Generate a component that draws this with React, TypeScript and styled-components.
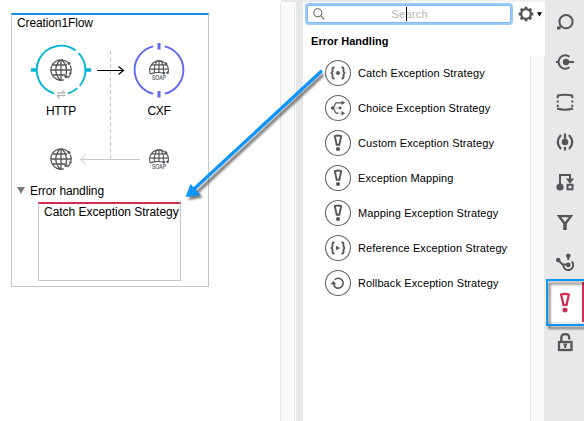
import React from "react";
import styled, { createGlobalStyle } from "styled-components";

const INK = "#55565a";
const CYAN = "#00b5d1";
const VIOLET = "#6068f2";
const RED = "#d22f50";
const BLUE = "#0d95fb";

const GlobalStyle = createGlobalStyle`
  * { box-sizing: border-box; }
  html, body { margin: 0; background: #fff; overflow: hidden; }
  body { font-family: "Liberation Sans", Arial, sans-serif; color: #000; }
  svg { display: block; overflow: visible; }
`;

const Screen = styled.div`
  position: relative;
  display: flex;
  width: 584px;
  height: 421px;
  overflow: hidden;
`;
const Canvas = styled.main`
  width: 280px;
  padding: 13px 0 0 11px;
`;
const FlowBox = styled.section`
  width: 198px;
  height: 274px;
  border: 1px solid #c6c6c6;
  border-top: 2px solid #1a8ae5;
  font-size: 12px;
`;
const FlowTitle = styled.h2`
  margin: 0;
  padding: 1px 0 0 5px;
  font-size: 12px;
  font-weight: 400;
  line-height: 14px;
  letter-spacing: -0.12px;
`;
const FlowGrid = styled.div`
  display: grid;
  grid-template-columns: 60px 38px 60px;
  grid-template-rows: 62px 19px 53px;
  margin: 10px 0 0 19px;
  justify-items: center;
`;
const Node = styled.div<{ $col: number; $row: number }>`
  grid-column: ${(p) => p.$col};
  grid-row: ${(p) => p.$row};
`;
const NodeLabel = styled.span<{ $col: number }>`
  grid-column: ${(p) => p.$col};
  grid-row: 2;
  line-height: 14px;
  padding-top: 2px;
  letter-spacing: -0.3px;
`;
const Connectors = styled.div`
  grid-column: 2;
  grid-row: 1 / 4;
`;
const SmallNode = styled(Node)`
  padding-top: 26px;
`;
const ErrorHeader = styled.div`
  display: flex;
  align-items: center;
  gap: 5px;
  height: 16px;
  padding-left: 5px;
  margin-top: 9px;
  letter-spacing: -0.1px;
`;
const StrategyBox = styled.div`
  width: 143px;
  height: 79px;
  margin: 3px 0 0 26px;
  padding: 0 0 0 5px;
  border: 1px solid #c6c6c6;
  border-top: 2px solid ${RED};
  line-height: 16px;
  letter-spacing: -0.03px;
  white-space: nowrap;
`;
const ScrollTrack = styled.div<{ $top: number }>`
  width: 15px;
  flex: none;
  margin-top: ${(p) => p.$top}px;
  background: #fafafa;
  border-left: 1px solid #e6e6e6;
  border-right: 1px solid #e9e9e9;
`;
const Work = styled.div`
  display: flex;
  width: 296px;
  background: linear-gradient(#e7e8ea, #e7e8ea) 281px 0 / 15px 2px no-repeat;
`;
const Sash = styled.div`
  width: 7px;
  background: #e7e8ea;
`;
const Palette = styled.aside`
  width: 242px;
  display: flex;
  flex-direction: column;
  padding-top: 2px;
  background:
    linear-gradient(#e7e8ea, #e7e8ea) 0 0 / 108px 2px no-repeat,
    linear-gradient(#f1f1f2, #f1f1f2) 0 0 / 100% 2px no-repeat;
`;
const SearchRow = styled.div`
  display: flex;
  align-items: center;
  height: 24px;
  margin-bottom: 2px;
  padding-left: 4px;
`;
const SearchField = styled.div`
  display: flex;
  align-items: center;
  width: 204px;
  height: 18px;
  padding: 0 82px 0 5px;
  justify-content: space-between;
  border: 1px solid #7fb9f4;
  border-radius: 2px;
  box-shadow: 0 0 0 2px #9acbfb;
  font-size: 11px;
  letter-spacing: 0.3px;
  color: #b5b5b5;
`;
const SearchText = styled.span`
  position: relative;
`;
const Caret = styled.span`
  position: absolute;
  left: 15px;
  top: -1px;
  width: 1px;
  height: 14px;
  background: #000;
`;
const Gear = styled.div`
  margin-left: 7px;
`;
const PaletteBody = styled.div`
  display: flex;
  flex: 1;
`;
const PaletteContent = styled.div`
  width: 227px;
  padding: 6px 0 0 8px;
`;
const Heading = styled.h3`
  margin: 0 0 7px;
  font-size: 11px;
  line-height: 14px;
  font-weight: 700;
  letter-spacing: 0.04px;
`;
const Item = styled.div`
  display: flex;
  align-items: center;
  gap: 6px;
  height: 35px;
  padding-left: 13px;
  font-size: 11px;
  letter-spacing: 0.11px;
  white-space: nowrap;
`;
const Rail = styled.nav`
  width: 39px;
  background: #e7e8ea;
  padding-top: 2px;
`;
const RailItem = styled.div<{ $active?: boolean }>`
  display: flex;
  align-items: center;
  height: 40px;
  padding-left: 8px;
  background: ${(p) => (p.$active ? "#fff" : "transparent")};
  border-right: ${(p) => (p.$active ? `2px solid ${RED}` : "0")};
`;
const Overlay = styled.div`
  position: absolute;
  inset: 0;
`;

const Globe = () => (
  <g fill="none" stroke={INK} strokeWidth="1.3">
    <path d="M7.2-7.2A10.2 10.2 0 1 0 3 9.8M9.2-4.5A10.2 10.2 0 0 1 9.9 2.5M9 5A10.2 10.2 0 0 1 6.5 8" />
    <path d="M0-10V10M-10 0H10M-8.5-5H6M-8.5 5H4M-1-10Q-9.5 0-1 10M1-10Q7-4 5 5" />
    <g fill={INK} stroke="none">
      <circle cx="8" cy="-6.5" r="1.5" />
      <circle cx="5" cy="6.5" r="1.6" />
      <circle cx="9.3" cy="3.5" r="1.2" />
    </g>
  </g>
);

const SoapGlobe = () => (
  <g fill="none" stroke={INK} strokeWidth="1.15">
    <path d="M-8.6 4A9.4 9.4 0 1 1 8.6 4M-8.6 4Q-6 2.8-3.8 2.6Q0 2.2 3.8 3M0-10V2.3M-4.6 2.5Q-5.5-5-1-9.8M4.5 1.5Q5.2-5 1-9.8M-8-5.2H7M-9.3-.9H9.3" />
    <g fill={INK} stroke="none">
      <circle cx="7" cy="-6" r="1.4" />
      <circle cx="4.8" cy="3" r="1.5" />
      <circle cx="8.4" cy="2.8" r="1.2" />
    </g>
    <text
      x="0"
      y="10"
      textAnchor="middle"
      fontSize="6.5"
      textLength="14"
      lengthAdjust="spacingAndGlyphs"
      fill={INK}
      stroke={INK}
      strokeWidth=".15"
    >
      SOAP
    </text>
  </g>
);

const SmallGlobe = ({ soap = false }: { soap?: boolean }) => (
  <svg width="24" height="24" viewBox="-12 -12 24 24">
    {soap ? <SoapGlobe /> : <Globe />}
  </svg>
);

const HttpNode = () => (
  <svg width="62" height="60" viewBox="-31 -30 62 60">
    <path
      d="M-7 23.4A24.4 24.4 0 1 1 14.7-19.5M17.6-16.9A24.4 24.4 0 0 1 18.8 15.6M16.3 18.1A24.4 24.4 0 0 1 7 23.4"
      fill="none"
      stroke={CYAN}
      strokeWidth="1.9"
    />
    <path d="M-30-1.8h6v3.6h-6zM24-1.8h6v3.6h-6z" fill={CYAN} />
    <path d="M-4 23H4L1 20.3M4 25.7H-4L-1 28.4" fill="none" stroke="#999" strokeWidth="1" />
    <Globe />
  </svg>
);

const CxfNode = () => (
  <svg width="60" height="60" viewBox="-30 -30 60 60">
    <path
      d="M-5.8-23.7A24.4 24.4 0 0 0-5.8 23.7M5.8-23.7A24.4 24.4 0 0 1 5.8 23.7"
      fill="none"
      stroke={VIOLET}
      strokeWidth="1.9"
    />
    <path d="M-1.5-27h3v6.5h-3zM-1.5 21h3v6.5h-3z" fill={VIOLET} />
    <SoapGlobe />
  </svg>
);

const ConnectorLines = () => (
  <svg width="60" height="120" viewBox="0 0 60 120">
    <path d="M30.5 11V119" stroke="#c4c4c4" strokeDasharray="4 2.5" />
    <path d="M17 30.5H43M38.5 26.5L43.5 30.5L38.5 34.5" stroke="#000" strokeWidth="1.2" fill="none" />
    <path d="M60 119.5H1M5.5 115L0.5 119.5L5.5 124" stroke="#c8c8c8" fill="none" />
  </svg>
);

const Bang = () => (
  <>
    <path d="M-3.2-6.9Q0-8.1 3.2-6.9L1.3 1.8H-1.3Z" fill="none" stroke="currentColor" strokeWidth="1.9" />
    <circle cy="6" r="2.1" fill="currentColor" />
  </>
);

type Kind = "catch" | "choice" | "bang" | "reference" | "rollback";

const Braces = () => (
  <path
    d="M-3.5-5.5H-4.5Q-5.5-5.5-5.5-4.3V-1.5L-6.5 0L-5.5 1.5V4.3Q-5.5 5.5-4.5 5.5H-3.5M3.5-5.5H4.5Q5.5-5.5 5.5-4.3V-1.5L6.5 0L5.5 1.5V4.3Q5.5 5.5 4.5 5.5H3.5"
    fill="none"
    stroke={INK}
    strokeWidth="1.8"
  />
);

const glyphs: Record<Kind, React.ReactNode> = {
  catch: (
    <>
      <Braces />
      <path d="M-4 0H4" stroke="#ccc" />
      <circle r="1.9" fill={INK} />
    </>
  ),
  choice: (
    <>
      <path d="M-3 0H4M-2 5.2H3" stroke="#ccc" strokeWidth="1.5" />
      <path d="M-5 0L-2-5.2H4M-5 0L-2 5.2H0" fill="none" stroke={INK} strokeWidth="1.3" />
      <path d="M3.5-7.6L7.1-5.2L3.5-2.9ZM3.5 2.9L7.1 5.2L3.5 7.6Z" fill={INK} />
      <circle cx="-5.3" r="1.8" fill={INK} />
      <circle cx="2" r="1.4" fill={INK} />
    </>
  ),
  bang: <Bang />,
  reference: (
    <>
      <Braces />
      <path d="M-2-2.3L2.2 0L-2 2.3Z" fill={INK} />
    </>
  ),
  rollback: (
    <>
      <path d="M-4.5 1.5A4.9 4.9 0 1 0-3.2-3.3" fill="none" stroke={INK} strokeWidth="1.6" />
      <path d="M-7.4 1.5L-4.6-2.2L-1.6 1.5Z" fill={INK} />
    </>
  ),
};

const items: { label: string; kind: Kind }[] = [
  { label: "Catch Exception Strategy", kind: "catch" },
  { label: "Choice Exception Strategy", kind: "choice" },
  { label: "Custom Exception Strategy", kind: "bang" },
  { label: "Exception Mapping", kind: "bang" },
  { label: "Mapping Exception Strategy", kind: "bang" },
  { label: "Reference Exception Strategy", kind: "reference" },
  { label: "Rollback Exception Strategy", kind: "rollback" },
];

const StrategyIcon = ({ kind }: { kind: Kind }) => (
  <svg width="28" height="28" viewBox="-14 -14 28 28" color={INK}>
    <circle r="12.5" fill="#fff" stroke="#666" strokeWidth="1.1" />
    {glyphs[kind]}
  </svg>
);

const railGlyphs: React.ReactNode[] = [
  <>
    <circle cx="1" cy="-.3" r="6.6" />
    <path d="M-3.8 4L-6.8 6.5M-7 4.5V6.6H-4.5" strokeWidth="1.8" />
  </>,
  <>
    <path d="M4.5-5.2A6.7 6.7 0 1 0 4.5 5.2M-9 0H-5.5M0 0H9" />
    <circle cx="1" r="3.2" fill={INK} stroke="none" />
  </>,
  <>
    <path d="M-8-6.2Q0-8.5 8-6.2M-8 6.5Q0 8.8 8 6.5" />
    <path d="M-7.3-6V7M7.3-6V7" strokeDasharray="2.2 2.2" />
  </>,
  <>
    <path d="M-4-7Q-10.5 0-4 7M4-7Q10.5 0 4 7M0-8.5V0M0 5V8.5" strokeWidth="2.2" />
    <circle r="3.3" fill={INK} stroke="none" />
  </>,
  <>
    <path d="M-5 3V-7H5V-2" />
    <path d="M1-3.5H9L5 2Z" fill={INK} stroke="none" />
    <circle cx="-5" cy="5" r="3.6" fill={INK} stroke="none" />
    <rect x="2.5" y="2.8" width="5" height="4.5" />
  </>,
  <>
    <path d="M-6-5.8H6L1 .8H-1Z" strokeWidth="2.3" />
    <path d="M0 0V8" strokeWidth="3.6" />
  </>,
  <>
    <path d="M-6.5-1.5L-2.5 2.5H3M3.3-6V-2M-1.7 2.5A5 5 0 1 0 6.8-.5" />
    <circle cx="-6.8" cy="-2" r="2.3" fill={INK} stroke="none" />
    <circle cx="3.3" cy="-6.3" r="2.3" fill={INK} stroke="none" />
    <circle cx="3.3" cy="2.9" r="2.3" fill={INK} stroke="none" />
  </>,
  <g stroke="none" color={RED} transform="translate(0 .8) scale(1.2)">
    <Bang />
  </g>,
  <>
    <rect x="-6" y="0" width="12.5" height="8" strokeWidth="2.3" />
    <path d="M-3.7 0V-4Q-3.7-7.8 .3-7.8T4.2-4V-2.5" strokeWidth="2.3" />
    <path d="M-1.5 2.5H2M.2 2.5V6" />
  </>,
];

export default function App() {
  return (
    <Screen>
      <GlobalStyle />
      <Work>
        <Canvas>
          <FlowBox>
            <FlowTitle>Creation1Flow</FlowTitle>
            <FlowGrid>
              <Node $col={1} $row={1}><HttpNode /></Node>
              <Node $col={3} $row={1}><CxfNode /></Node>
              <NodeLabel $col={1}>HTTP</NodeLabel>
              <NodeLabel $col={3}>CXF</NodeLabel>
              <SmallNode $col={1} $row={3}><SmallGlobe /></SmallNode>
              <SmallNode $col={3} $row={3}><SmallGlobe soap /></SmallNode>
              <Connectors><ConnectorLines /></Connectors>
            </FlowGrid>
            <ErrorHeader>
              <svg width="8" height="8" viewBox="0 0 8 8"><path d="M0 0H8L4 7Z" fill="#7d7d7d" /></svg>
              Error handling
            </ErrorHeader>
            <StrategyBox>Catch Exception Strategy</StrategyBox>
          </FlowBox>
        </Canvas>
        <ScrollTrack $top={3} />
      </Work>
      <Sash />
      <Palette>
        <SearchRow>
          <SearchField>
            <svg width="12" height="12" viewBox="0 0 12 12" fill="none" stroke="#666" strokeWidth="1.1">
              <circle cx="4.8" cy="4.8" r="4" />
              <path d="M7.8 7.8L11.3 11.3" />
            </svg>
            <SearchText>Search<Caret /></SearchText>
          </SearchField>
          <Gear>
            <svg width="25" height="16" viewBox="-8 -8 25 16">
              <circle r="4.8" fill="none" stroke={INK} strokeWidth="2.3" />
              <path
                d="M0-5V-7.3M0 5V7.3M-5 0H-7.3M5 0H7.3M-3.6-3.6L-5.2-5.2M3.6-3.6L5.2-5.2M-3.6 3.6L-5.2 5.2M3.6 3.6L5.2 5.2"
                stroke={INK}
                strokeWidth="2.8"
              />
              <path d="M11-1.8H16L13.5 2.5Z" fill="#000" />
            </svg>
          </Gear>
        </SearchRow>
        <PaletteBody>
          <PaletteContent>
            <Heading>Error Handling</Heading>
            {items.map((item) => (
              <Item key={item.label}>
                <StrategyIcon kind={item.kind} />
                {item.label}
              </Item>
            ))}
          </PaletteContent>
          <ScrollTrack $top={28} />
        </PaletteBody>
      </Palette>
      <Rail>
        {railGlyphs.map((glyph, i) => (
          <RailItem key={i} $active={i === 7}>
            <svg width="24" height="24" viewBox="-12 -12 24 24" fill="none" stroke={INK} strokeWidth="2">
              {glyph}
            </svg>
          </RailItem>
        ))}
      </Rail>
      <Overlay>
        <svg width="584" height="421" viewBox="0 0 584 421">
          <defs>
            <filter id="soft" x="-10%" y="-10%" width="120%" height="120%">
              <feGaussianBlur stdDeviation="1" />
            </filter>
          </defs>
          <g transform="translate(2.3 3)" opacity=".6" filter="url(#soft)">
            <path d="M321 71.5L194 190" stroke="#222" strokeWidth="3.2" />
            <path d="M186 197L191 184L200.5 194.5Z" fill="#222" />
            <path d="M590 280.5H547V325H590" fill="none" stroke="#222" strokeWidth="2.2" />
          </g>
          <path d="M321 71.5L194 189" stroke={BLUE} strokeWidth="3.2" strokeLinecap="round" />
          <path d="M185.5 197L190.5 184L200.5 195Z" fill={BLUE} />
          <path d="M590 280H547V325H590" fill="none" stroke={BLUE} strokeWidth="2" />
        </svg>
      </Overlay>
    </Screen>
  );
}
